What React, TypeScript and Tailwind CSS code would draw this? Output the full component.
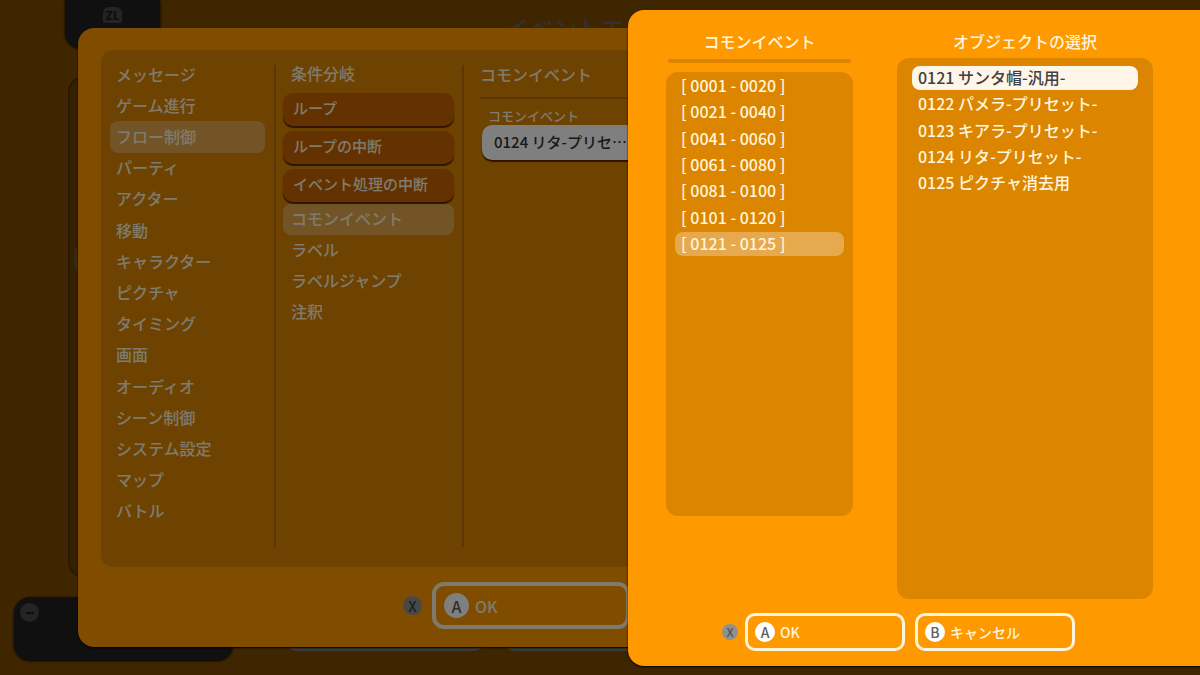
import type { ReactNode } from "react";
import clsx from "clsx";

const categories = [
  "メッセージ",
  "ゲーム進行",
  "フロー制御",
  "パーティ",
  "アクター",
  "移動",
  "キャラクター",
  "ピクチャ",
  "タイミング",
  "画面",
  "オーディオ",
  "シーン制御",
  "システム設定",
  "マップ",
  "バトル",
];

const commands = [
  { label: "条件分岐" },
  { label: "ループ", block: true },
  { label: "ループの中断", block: true },
  { label: "イベント処理の中断", block: true },
  { label: "コモンイベント" },
  { label: "ラベル" },
  { label: "ラベルジャンプ" },
  { label: "注釈" },
];

const ranges = [
  "[ 0001 - 0020 ]",
  "[ 0021 - 0040 ]",
  "[ 0041 - 0060 ]",
  "[ 0061 - 0080 ]",
  "[ 0081 - 0100 ]",
  "[ 0101 - 0120 ]",
  "[ 0121 - 0125 ]",
];

const objects = [
  "0121 サンタ帽-汎用-",
  "0122 パメラ-プリセット-",
  "0123 キアラ-プリセット-",
  "0124 リタ-プリセット-",
  "0125 ピクチャ消去用",
];

function Backdrop() {
  return <div className="absolute inset-0 bg-black/50" />;
}

function Key({ className, children }: { className: string; children: ReactNode }) {
  return (
    <span className={clsx("flex shrink-0 items-center justify-center rounded-full leading-none", className)}>
      {children}
    </span>
  );
}

function EditorScreen() {
  return (
    <div className="pb-4">
      <header className="flex h-12">
        <div className="ml-[65px] flex w-[95px] justify-center rounded-bl-2xl bg-[#404040] pt-[7px] shadow-[0_1px_3px_#000]">
          <span className="flex h-4 w-[19px] items-center justify-center rounded-t-md rounded-b-xs bg-[#909090] text-xs font-bold text-[#303030]">
            ZL
          </span>
        </div>
        <h1 className="mr-40 flex-1 pt-3 text-center text-2xl leading-8 font-medium text-[#c8c8c8]">
          イベントエディタ
        </h1>
      </header>
      <main className="mx-[68px] mt-7 flex h-[502px] items-center rounded-2xl border-2 border-[#a06000] bg-[#d88200] pl-1">
        <div className="-mt-[136px] h-7 w-8 rounded-lg bg-white/30" />
      </main>
      <footer className="mt-[19px] flex">
        <div className="ml-3.5 h-[63px] w-[219px] rounded-2xl bg-[#404040] p-1.5 shadow-[0_1px_3px_#000]">
          <Key className="size-[19px] bg-[#909090]">
            <span className="h-0.5 w-2 bg-[#303030]" />
          </Key>
        </div>
        <div className="ml-[52px] mt-4 flex gap-[18px]">
          <div className="h-[38px] w-[200px] rounded-xl border-3 border-[#f0f0f0]" />
          <div className="h-[38px] w-[200px] rounded-xl border-3 border-[#f0f0f0]" />
        </div>
      </footer>
    </div>
  );
}

function CommandDialog() {
  return (
    <section className="absolute top-7 right-[78px] left-[78px] rounded-2xl bg-[#ff9900] px-[23px] pt-[22px] pb-[18px] shadow-[0_1px_2px_#000]">
      <div className="flex h-[517px] rounded-xl bg-[#dc8500] px-[9px] pt-[9px] pb-5">
        <ul className="flex h-[468px] w-[155px] flex-col">
          {categories.map((label) => (
            <li key={label} className="flex flex-1">
              <button
                className={clsx(
                  "w-full rounded-lg px-1.5 pb-0.5 text-left leading-7",
                  label === "フロー制御" && "bg-white/30",
                )}
              >
                {label}
              </button>
            </li>
          ))}
        </ul>
        <div className="mt-1.5 ml-[9px] w-0.5 bg-[#b86c00]" />
        <ul className="ml-[7px] w-[171px]">
          {commands.map(({ label, block }) => (
            <li key={label} className={clsx(block && "pt-[3px] pb-0.5")}>
              <button
                className={clsx(
                  "block w-full pb-[3px] text-left leading-7",
                  block
                    ? "h-[33px] rounded-[10px] bg-[#c86400] px-2.5 text-[15px] shadow-[0_2px_1px_#602800]"
                    : "h-[31px] rounded-lg px-2",
                  label === "コモンイベント" && "bg-white/30",
                )}
              >
                {label}
              </button>
            </li>
          ))}
        </ul>
        <div className="mt-1.5 ml-2 w-0.5 bg-[#b86c00]" />
        <div className="ml-4 flex-1">
          <h2 className="leading-[30px]">コモンイベント</h2>
          <div className="mt-2 h-0.5 bg-[#b86c00]" />
          <label htmlFor="common-event" className="mt-2 block pl-2 text-[13px] leading-[18px]">
            コモンイベント
          </label>
          <button
            id="common-event"
            className="ml-0.5 h-[35px] w-[180px] rounded-[10px] bg-white pl-3 text-left text-[15px] whitespace-nowrap text-[#303030] shadow-[0_2px_1px_#602800]"
          >
            0124 リタ-プリセ…
          </button>
        </div>
      </div>
      <div className="mt-[15px] flex items-center gap-2.5 pl-[302px]">
        <Key className="size-[19px] bg-[#909090] text-sm text-[#404040]">X</Key>
        <button className="flex h-[47px] w-[198px] items-center gap-1.5 rounded-xl border-4 border-[#fff5dc] pl-2">
          <Key className="size-[25px] bg-white text-base text-[#606060]">A</Key>
          OK
        </button>
      </div>
    </section>
  );
}

function ObjectDialog() {
  return (
    <section className="absolute top-2.5 right-0 w-[572px] rounded-l-2xl bg-[#ff9900] pt-5 pb-[15px] pl-[38px] shadow-[0_1px_2px_#000]">
      <div className="flex gap-11">
        <div className="w-[187px]">
          <h2 className="text-center leading-[22px]">コモンイベント</h2>
          <div className="mx-0.5 mt-[7px] h-1 rounded-full bg-[#dc8500]" />
          <div className="mt-[9px] h-[444px] rounded-xl bg-[#dc8500] px-[9px] pt-0.5">
            <ul className="flex h-[182px] flex-col justify-between">
              {ranges.map((label, i) => (
                <li key={label}>
                  <button
                    className={clsx(
                      "block h-6 w-full rounded-lg px-1.5 pb-0.5 text-left leading-[22px]",
                      i === ranges.length - 1 && "bg-white/30",
                    )}
                  >
                    {label}
                  </button>
                </li>
              ))}
            </ul>
          </div>
        </div>
        <div className="w-64">
          <h2 className="text-center leading-[22px]">オブジェクトの選択</h2>
          <div className="mt-1.5 h-[541px] rounded-xl bg-[#dc8500] px-[15px] pt-2">
            <ul className="flex h-[129px] flex-col justify-between">
              {objects.map((label, i) => (
                <li key={label}>
                  <button
                    className={clsx(
                      "block h-6 w-full rounded-lg px-1.5 pb-0.5 text-left leading-[22px]",
                      i === 0 && "bg-[#fff5e8] text-[#404040]",
                    )}
                  >
                    {label}
                  </button>
                </li>
              ))}
            </ul>
          </div>
        </div>
      </div>
      <div className="mt-3.5 flex items-center pl-14 text-sm">
        <Key className="size-4 bg-[#909090] text-xs text-[#505050]">X</Key>
        <button className="ml-[7px] flex h-[38px] w-40 items-center gap-[5px] rounded-[10px] border-3 border-[#fff5dc] pl-[7px]">
          <Key className="size-5 bg-white text-[#606060]">A</Key>
          OK
        </button>
        <button className="ml-2.5 flex h-[38px] w-40 items-center gap-[5px] rounded-[10px] border-3 border-[#fff5dc] pl-[7px]">
          <Key className="size-5 bg-white text-[#606060]">B</Key>
          キャンセル
        </button>
      </div>
    </section>
  );
}

export default function App() {
  return (
    <div className="relative min-h-screen overflow-hidden bg-[#ff9900] font-['Noto_Sans_CJK_JP',sans-serif] text-base font-medium text-[#fff5dc]">
      <EditorScreen />
      <Backdrop />
      <CommandDialog />
      <Backdrop />
      <ObjectDialog />
    </div>
  );
}
